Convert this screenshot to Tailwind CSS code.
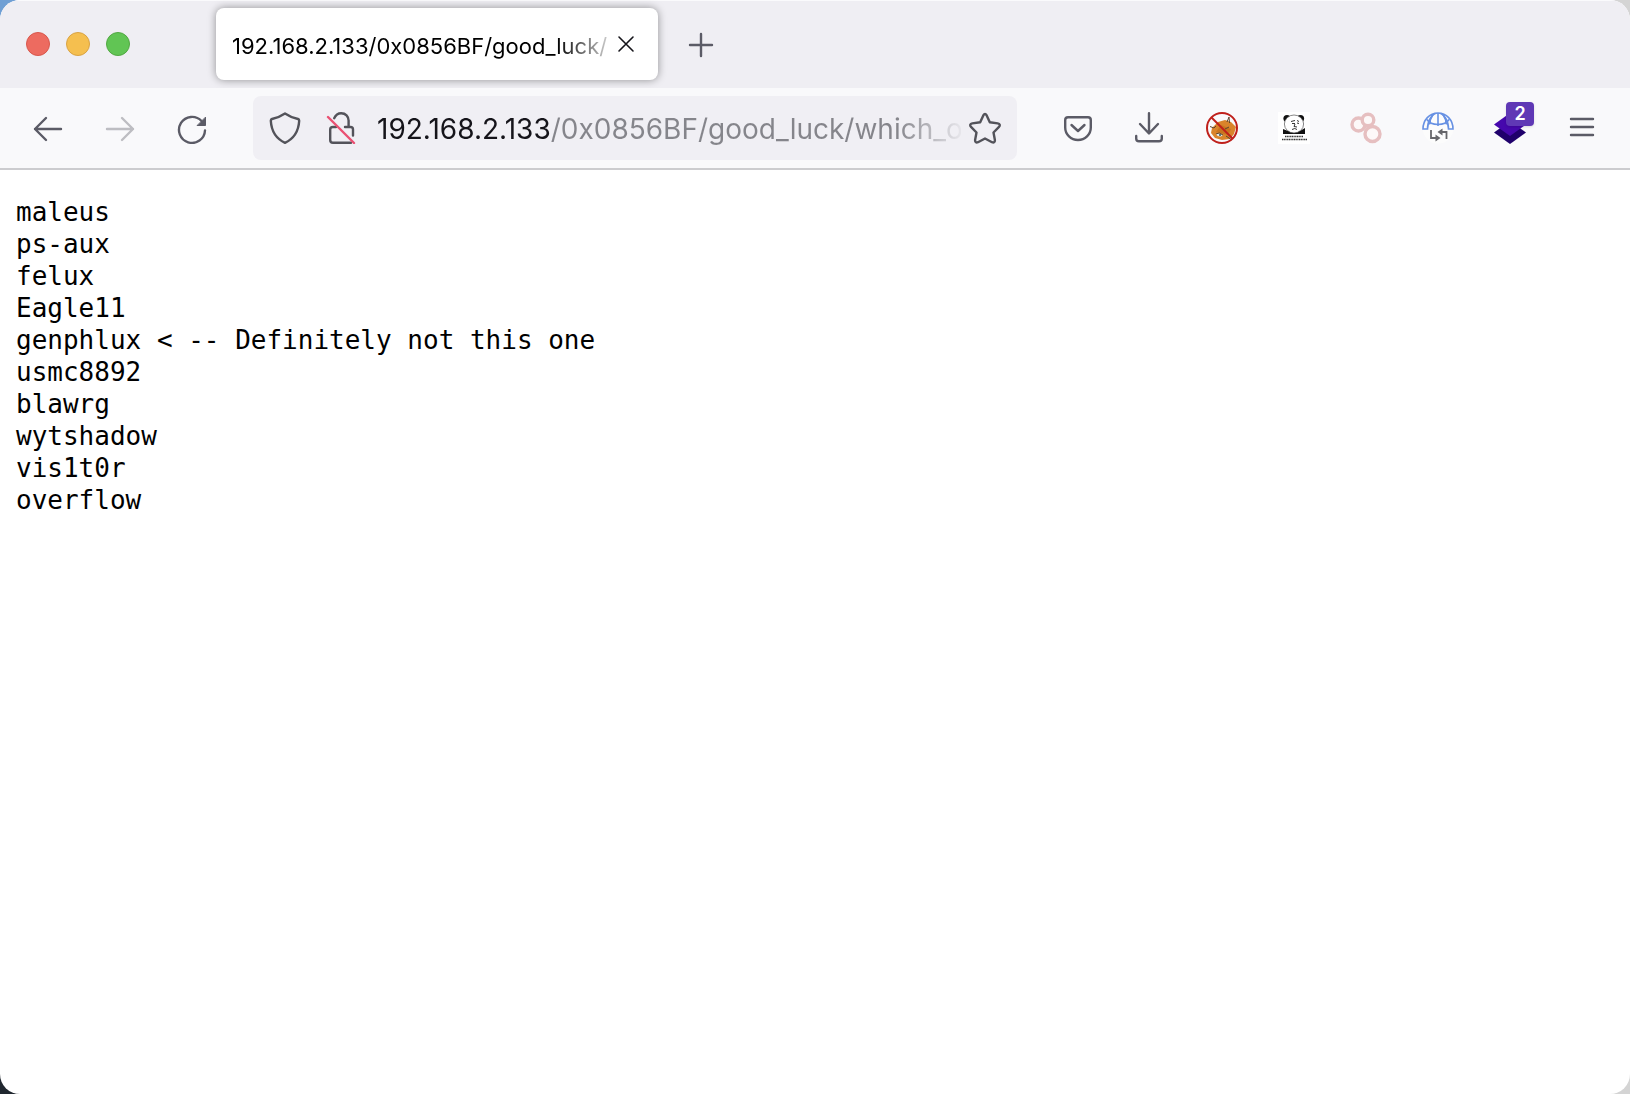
<!DOCTYPE html>
<html lang="en">
<head>
<meta charset="UTF-8" />
<meta name="viewport" content="width=device-width, initial-scale=1" />
<title>192.168.2.133/0x0856BF/good_luck/</title>
<script src="https://cdn.jsdelivr.net/npm/@tailwindcss/browser@4"></script>
</head>
<body class="min-h-screen flex bg-[linear-gradient(90deg,transparent_50%,#d4d4d4_50%),linear-gradient(#6f9fd4_50%,#20272f_50%)] font-['Inter',sans-serif]">

<div class="flex-grow flex flex-col min-w-0 rounded-[20px] overflow-hidden bg-white">

  <!-- Tab strip -->
  <header class="flex items-center h-[88px] bg-[#efeef3] shadow-[inset_0_1px_0_#fafafc]">
    <div class="flex gap-4 pl-[26px] w-[216px] shrink-0">
      <button aria-label="Close window" class="size-6 rounded-full bg-[#ed6b60] border border-[#d8574c]"></button>
      <button aria-label="Minimize window" class="size-6 rounded-full bg-[#f5bf4f] border border-[#d9a344]"></button>
      <button aria-label="Zoom window" class="size-6 rounded-full bg-[#61c554] border border-[#52a842]"></button>
    </div>
    <div class="flex items-center w-[442px] h-[72px] pl-4 pr-5 rounded-lg bg-white shadow-[0_0_8px_rgba(0,0,0,0.4)]">
      <span class="flex-grow pt-1 overflow-hidden whitespace-nowrap text-[22px] leading-8 text-transparent bg-clip-text bg-linear-to-r from-black from-85% to-black/10">192.168.2.133/0x0856BF/good_luck/</span>
      <button aria-label="Close tab" class="shrink-0">
        <svg class="size-6" viewBox="0 0 24 24" fill="none" stroke="#15141a" stroke-width="1.6" stroke-linecap="round"><path d="M5 5l14 14M19 5L5 19"/></svg>
      </button>
    </div>
    <button aria-label="New tab" class="ml-[27px]">
      <svg class="size-8" viewBox="0 0 32 32" fill="none" stroke="#5b5b66" stroke-width="2.4" stroke-linecap="round"><path d="M16 6v22M5 17h22"/></svg>
    </button>
  </header>

  <!-- Navigation toolbar -->
  <nav class="flex items-center h-[82px] px-3 bg-[#f9f9fb] border-b-2 border-[#cccccf]">
    <button aria-label="Back" class="w-[72px] shrink-0 flex justify-center">
      <svg class="size-8" viewBox="0 0 32 32" fill="none" stroke="#5b5b66" stroke-width="2.4" stroke-linecap="round" stroke-linejoin="round"><path d="M29 17H3M14 6L3 17l11 11"/></svg>
    </button>
    <button aria-label="Forward" disabled class="w-[72px] shrink-0 flex justify-center">
      <svg class="size-8" viewBox="0 0 32 32" fill="none" stroke="#bdbdc2" stroke-width="2.4" stroke-linecap="round" stroke-linejoin="round"><path d="M3 17h26M18 6l11 11-11 11"/></svg>
    </button>
    <button aria-label="Reload" class="w-[72px] shrink-0 flex justify-center">
      <svg class="size-8" viewBox="0 0 32 32" fill="none" stroke="#5b5b66" stroke-width="2.4" stroke-linecap="round"><path d="M29 18.5A13 13 0 1 1 25.5 9"/><path d="M29.500 5.500v8h-8z" fill="#5b5b66" stroke-width="1" stroke-linejoin="round"/></svg>
    </button>

    <div class="flex-grow min-w-0 flex items-center h-16 ml-[25px] mr-[25px] px-4 rounded-lg bg-[#f0eff4]">
      <button aria-label="Tracking protection" class="shrink-0">
        <svg class="size-8" viewBox="0 0 32 32" fill="none" stroke="#53535a" stroke-width="2.4" stroke-linejoin="round"><path d="M16 1.4Q22 5.4 29 7Q30.2 7.4 30.2 8.8C29.6 19 25.6 26.4 16 30.8C6.400 26.400 2.400 19 1.800 8.800Q1.800 7.400 3 7Q10 5.400 16 1.400Z"/></svg>
      </button>
      <button aria-label="Connection is not secure" class="shrink-0 ml-6">
        <svg class="size-8" viewBox="0 0 32 32" fill="none" stroke="#53535a" stroke-width="2.4" stroke-linecap="round">
          <path d="M9.200 6.200C10.600 3 13.200 1.200 16.200 1.200C20.600 1.200 23.600 4.400 23.600 8.600V15M20 15H25.500Q28 15 28 17.500V23.500M11 15H8Q5.200 15 5.200 17.500V28Q5.200 30.800 8 30.800H26"/>
          <path d="M3 5l26 26" stroke="#ea5072"/>
        </svg>
      </button>
      <!-- Host in black, path in grey, fading out at the right edge -->
      <input type="text" aria-label="Address" value="192.168.2.133/0x0856BF/good_luck/which_o" class="flex-grow min-w-0 ml-5 pt-0.5 text-[28px] leading-8 outline-none text-transparent bg-clip-text bg-[linear-gradient(90deg,#15141a_173px,#85858b_173px,#85858b_520px,#f0eff4_590px)]" />
      <button aria-label="Bookmark this page" class="shrink-0 ml-2">
        <svg class="size-8" viewBox="0 0 32 32" fill="none" stroke="#53535a" stroke-width="2.4" stroke-linejoin="round"><path d="M14.300 3.400Q16 0.600 17.700 3.400L20.800 10.200L28.700 11.400Q32 12.200 30 14.900L24.500 20.500L25.900 28Q26 31.200 23 30.200L16 26.500L9 30.200Q6 31.200 6.100 28L7.500 20.500L2 14.900Q0 12.200 3.300 11.400L11.200 10.200Z"/></svg>
      </button>
    </div>

    <button aria-label="Save to Pocket" class="w-[72px] shrink-0 flex justify-center">
      <svg class="size-8" viewBox="0 0 32 32" fill="none" stroke="#5b5b66" stroke-width="2.4" stroke-linecap="round" stroke-linejoin="round"><path d="M6 5.200H26Q28.800 5.200 28.800 8V15.500C28.800 22.500 23 28 16 28S3.200 22.500 3.200 15.500V8Q3.200 5.200 6 5.200Z"/><path d="M9.500 13l6.500 6 6.500-6"/></svg>
    </button>
    <button aria-label="Downloads" class="w-[72px] shrink-0 flex justify-center">
      <svg class="size-8" viewBox="0 0 32 32" fill="none" stroke="#5b5b66" stroke-width="2.4" stroke-linecap="round" stroke-linejoin="round"><path d="M15 1.200V21M6 12l9 9.500 9-9.500"/><path d="M2.200 24V26.500Q2.200 29.200 5 29.200H25Q27.800 29.200 27.800 26.500V24"/></svg>
    </button>
    <button aria-label="FoxyProxy" class="w-[72px] shrink-0 flex justify-center">
      <svg class="size-8" viewBox="0 0 32 32" fill="none">
        <circle cx="16" cy="16" r="15" fill="#f9f9fb"/>
        <path d="M6 16L12 10 19 8 25 10 30 15 28 22 24 27 16 28 9 26 5 21Z" fill="#d9842b"/>
        <path d="M10 20L15 13 25 17 22 23 14 21Z" fill="#c8741f"/>
        <path d="M10 22.500Q13 20 17 23L15 24.500Q12 25 10 22.500Z" fill="#e8ece8"/>
        <path d="M4 14.500L8 16 10 14M21 10L23 5 23.500 11M19 17L23 15M20 24L26 28M10 22Q13 19.500 17 23" stroke="#5b4630" stroke-width="1"/>
        <circle cx="14" cy="23" r="1.100" fill="#3d5a66"/>
        <circle cx="16" cy="16" r="15" stroke="#bf201b" stroke-width="2"/>
        <path d="M5.500 5.500l21 21" stroke="#bf201b" stroke-width="2"/>
      </svg>
    </button>
    <button aria-label="HackTools" class="w-[72px] shrink-0 flex justify-center">
      <svg class="size-8" viewBox="0 0 32 32" fill="none">
        <path d="M0 0h32v32H0z" fill="#fff"/>
        <path d="M5 22V17L10 19H22L27 16V22Z" fill="#111"/>
        <circle cx="9" cy="6.500" r="3.600" fill="#111"/>
        <circle cx="22.500" cy="6.500" r="3.600" fill="#111"/>
        <ellipse cx="16" cy="12" rx="9.600" ry="9" fill="#fff" stroke="#555" stroke-width=".7"/>
        <path d="M13 9.500l4-1M19 8.500l2 1M14 11.500h3M19 11l2 .5M17 12l-1 2.500 3 .5M14 17.500q3-2 5 0" stroke="#333" stroke-width="1"/>
        <path d="M7 24.500H25" stroke="#333" stroke-width="1.500" stroke-dasharray="1.200 .5"/>
        <path d="M4 27.500H29" stroke="#333" stroke-width="1.600" stroke-dasharray="1.200 .5"/>
      </svg>
    </button>
    <button aria-label="Containers" class="w-[72px] shrink-0 flex justify-center">
      <svg class="size-8" viewBox="0 0 32 32" fill="#fdf8f8" stroke="#e6bfc0" stroke-width="3.400">
        <circle cx="8.500" cy="12.500" r="6.500"/>
        <circle cx="18" cy="8" r="5.800"/>
        <circle cx="22.500" cy="22" r="7.500"/>
      </svg>
    </button>
    <button aria-label="Proxy switcher" class="w-[72px] shrink-0 flex justify-center">
      <svg class="size-8" viewBox="0 0 32 32" fill="none">
        <circle cx="16" cy="16" r="15.500" fill="#fcfcfc"/>
        <g stroke="#6791e3" stroke-width="1.600">
          <path d="M1 17C1 8 7.500 1 16 1S31 8 31 17H26.500C26.500 9 22 1 16 1S5.500 9 5.500 17Z"/>
          <path d="M16 1V14M5 7.500Q8 12.500 16 12.500T27 7.500M11 2.500Q8 7 7.500 12.500M21 2.500Q24 7 24.500 12.500"/>
        </g>
        <g stroke="#66666a" stroke-width="1.800"><path d="M9 18V26H14M24.500 27V20H20"/></g>
        <path d="M13.500 22.500L18.500 26 13.500 29.500ZM20.500 16.500L15.500 20 20.500 23.500Z" fill="#66666a"/>
      </svg>
    </button>
    <button aria-label="Wappalyzer, 2 detected" class="relative w-[72px] shrink-0 flex justify-center">
      <svg class="size-8" viewBox="0 0 32 32">
        <path d="M16 9L32 20.500 16 32 0 20.500Z" fill="#1f006b"/>
        <path d="M16 1L32 12.500 16 24 0 12.500Z" fill="#4608ad"/>
      </svg>
      <span class="absolute left-8 -top-[10px] w-7 h-6 rounded-sm bg-[#5f38b5] shadow-sm text-white text-[18px] leading-6 font-semibold text-center">2</span>
    </button>
    <button aria-label="Open application menu" class="w-[72px] shrink-0 flex justify-center">
      <svg class="size-8" viewBox="0 0 32 32" fill="none" stroke="#5b5b66" stroke-width="2.400" stroke-linecap="round"><path d="M5 7h22M5 15h22M5 23h22"/></svg>
    </button>
  </nav>

  <!-- Plain text document -->
  <main class="flex-grow px-4 pt-[26px]">
<pre class="font-['DejaVu_Sans_Mono',monospace] text-[26px] leading-8 text-black">maleus
ps-aux
felux
Eagle11
genphlux &lt; -- Definitely not this one
usmc8892
blawrg
wytshadow
vis1t0r
overflow</pre>
  </main>
</div>

</body>
</html>
